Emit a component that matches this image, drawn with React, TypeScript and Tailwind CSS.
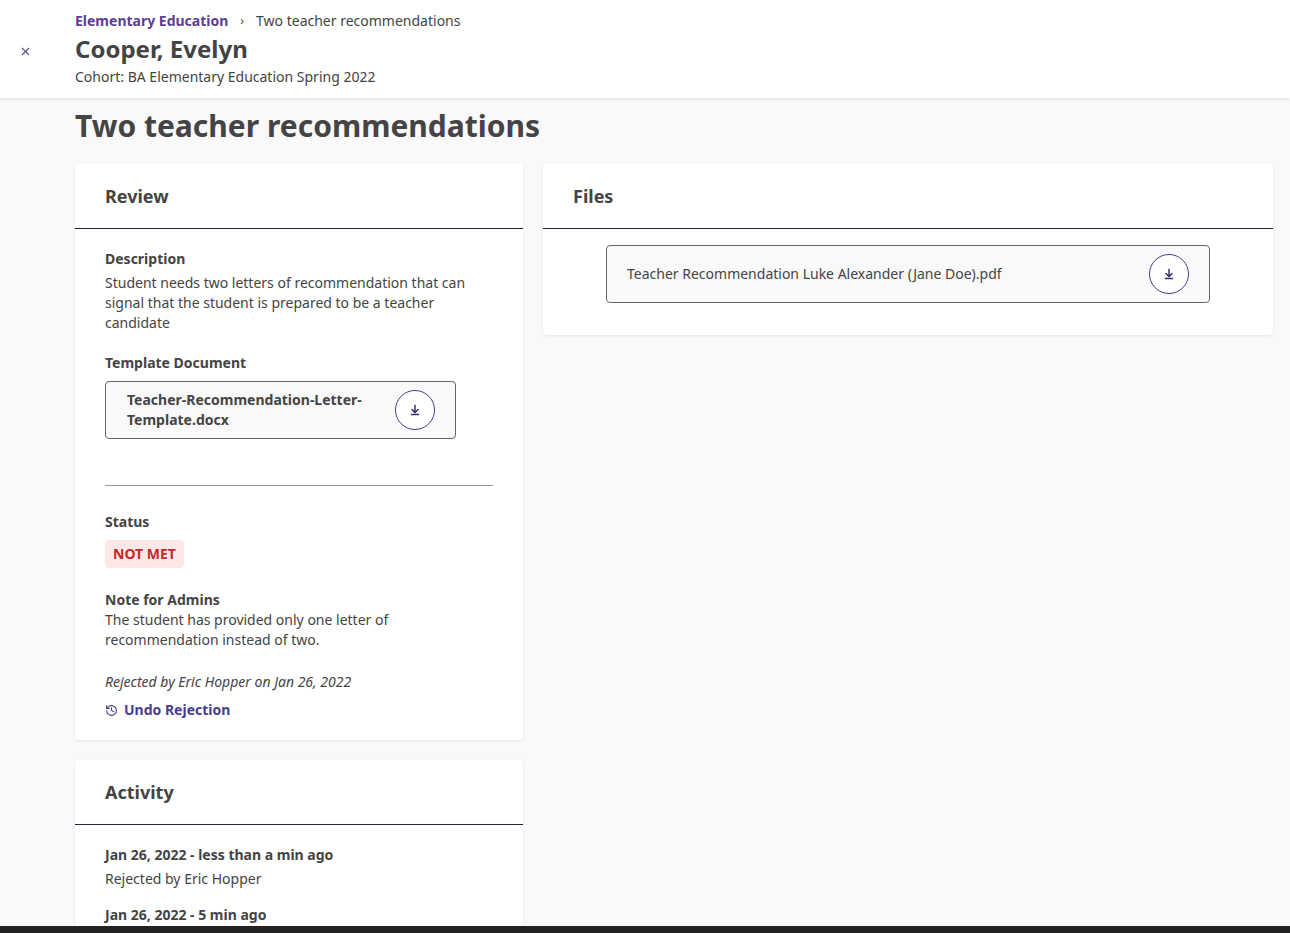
import { X, ArrowDownToLine, History } from "lucide-react";

function DownloadButton() {
  return (
    <button className="w-10 h-10 shrink-0 rounded-full border border-[#4b3b8f] bg-white flex items-center justify-center text-[#3b2d6e]">
      <ArrowDownToLine size={12} strokeWidth={3} />
    </button>
  );
}

function App() {
  return (
    <div className="h-[933px] overflow-hidden flex flex-col bg-[#f9f9f9] text-[#444] font-['Liberation_Sans']">
      <header className="bg-white h-[98px] shrink-0 shadow-[0_1px_4px_rgba(0,0,0,0.12)] flex items-center relative z-10">
        <div className="w-[75px] pl-[19px]">
          <X size={13} className="text-[#5a4c8f] mt-1" />
        </div>
        <div className="flex flex-col">
          <div className="text-sm flex items-center gap-3">
            <span className="font-bold text-[#5b3f93]">Elementary Education</span>
            <span className="text-xs">›</span>
            <span>Two teacher recommendations</span>
          </div>
          <h1 className="text-2xl font-bold mt-1 leading-7">Cooper, Evelyn</h1>
          <div className="text-sm mt-1">Cohort: BA Elementary Education Spring 2022</div>
        </div>
      </header>
      <main className="flex-1 overflow-hidden pl-[75px] pr-[17px]">
        <h2 className="text-[30px] font-bold mt-[10px] leading-9">Two teacher recommendations</h2>
        <div className="flex gap-5 mt-[20px] items-start">
          <div className="w-[448px] flex flex-col gap-5">
            <section className="bg-white rounded shadow-[0_1px_3px_rgba(0,0,0,0.08)]">
              <div className="h-[65px] px-[30px] flex items-center border-b border-[#2d1d45] text-lg font-bold">Review</div>
              <div className="px-[30px] pt-5 pb-5 text-sm">
                <div className="font-bold">Description</div>
                <p className="mt-1 leading-5">Student needs two letters of recommendation that can signal that the student is prepared to be a teacher candidate</p>
                <div className="font-bold mt-5">Template Document</div>
                <div className="mt-2 w-[351px] h-[58px] border border-[#666] rounded-sm bg-[#f9f9f9] flex items-center justify-between pl-[21px] pr-5">
                  <span className="font-bold leading-5">Teacher-Recommendation-Letter-<br />Template.docx</span>
                  <DownloadButton />
                </div>
                <hr className="mt-[46px] border-[#999]" />
                <div className="font-bold mt-[26px]">Status</div>
                <span className="inline-block mt-2 px-2 py-1 rounded bg-[#fde8e8] text-[#c62828] font-bold">NOT MET</span>
                <div className="font-bold mt-[22px]">Note for Admins</div>
                <p className="leading-5">The student has provided only one letter of recommendation instead of two.</p>
                <p className="italic mt-[22px]">Rejected by Eric Hopper on Jan 26, 2022</p>
                <div className="mt-2 flex items-center gap-[6px] text-[#4b3b8f] font-bold">
                  <History size={13} />
                  <span>Undo Rejection</span>
                </div>
              </div>
            </section>
            <section className="bg-white rounded shadow-[0_1px_3px_rgba(0,0,0,0.08)]">
              <div className="h-[65px] px-[30px] flex items-center border-b border-[#2d1d45] text-lg font-bold">Activity</div>
              <div className="px-[30px] pt-5 text-sm">
                <div className="font-bold">Jan 26, 2022 - less than a min ago</div>
                <div className="mt-1">Rejected by Eric Hopper</div>
                <div className="font-bold mt-4">Jan 26, 2022 - 5 min ago</div>
                <div className="mt-1 leading-5">Teacher Recommendation Luke Alexander (Jane Doe).pdf<br />uploaded by Eric Hopper</div>
              </div>
            </section>
          </div>
          <section className="flex-1 bg-white rounded shadow-[0_1px_3px_rgba(0,0,0,0.08)] pb-8">
            <div className="h-[65px] px-[30px] flex items-center border-b border-[#2d1d45] text-lg font-bold">Files</div>
            <div className="flex justify-center pt-4">
              <div className="w-[604px] h-[58px] border border-[#666] rounded-sm bg-[#f9f9f9] flex items-center justify-between pl-5 pr-5 text-sm">
                <span>Teacher Recommendation Luke Alexander (Jane Doe).pdf</span>
                <DownloadButton />
              </div>
            </div>
          </section>
        </div>
      </main>
      <div className="h-[7px] shrink-0 bg-[#222]" />
    </div>
  );
}

export default App;
